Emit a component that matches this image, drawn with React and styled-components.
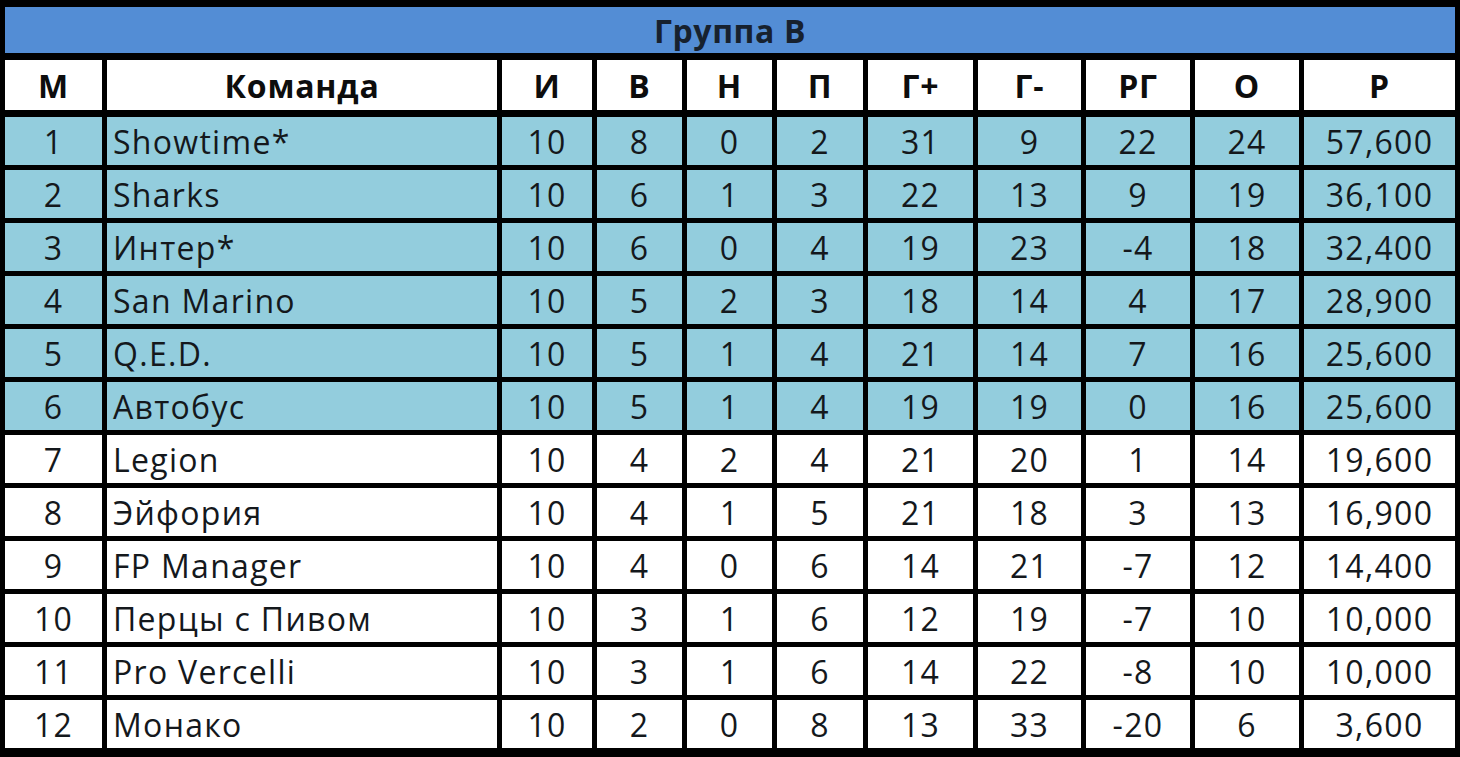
import React from 'react'
import styled, { createGlobalStyle } from 'styled-components'

const GlobalStyle = createGlobalStyle`
    html, body {
        margin: 0;
        padding: 0;
        background: #000;
    }
`;

const COLUMNS = '97px 390px 90px 85px 85px 86px 105px 103px 104px 104px 151px';

const Board = styled.div`
    width: 1460px;
    height: 757px;
    box-sizing: border-box;
    background: #000;
    padding: 7px 5px 9px 5px;
    display: flex;
    flex-direction: column;
    font-family: "Open Sans", "Noto Sans", sans-serif;
    color: #16191d;
`;

const Title = styled.div`
    height: 46px;
    background: #538dd5;
    display: flex;
    align-items: center;
    justify-content: center;
    font-size: 32px;
    font-weight: 700;
    letter-spacing: 0.6px;
    color: #17212e;
    margin-bottom: 7px;
`;

const Row = styled.div`
    display: grid;
    grid-template-columns: ${COLUMNS};
    column-gap: 5px;
    height: ${p => (p.$head ? 50 : 48)}px;
    margin-bottom: ${p => (p.$head ? 7 : p.$last ? 0 : 5)}px;
`;

const Cell = styled.div`
    background: ${p => (p.$tone === 'blue' ? '#93cddd' : '#ffffff')};
    display: flex;
    align-items: center;
    justify-content: ${p => (p.$left ? 'flex-start' : 'center')};
    padding-left: ${p => (p.$left ? 6 : 0)}px;
    font-size: 32px;
    font-weight: ${p => (p.$head ? 700 : 500)};
    letter-spacing: ${p => (p.$head ? 0.8 : 1.3)}px;
    color: ${p => (p.$head ? '#0d0d0d' : '#14181c')};
    white-space: nowrap;
    overflow: hidden;
`;

const headers = ['М', 'Команда', 'И', 'В', 'Н', 'П', 'Г+', 'Г-', 'РГ', 'О', 'Р'];

const teams = [
    [1, 'Showtime*', 10, 8, 0, 2, 31, 9, 22, 24, '57,600'],
    [2, 'Sharks', 10, 6, 1, 3, 22, 13, 9, 19, '36,100'],
    [3, 'Интер*', 10, 6, 0, 4, 19, 23, -4, 18, '32,400'],
    [4, 'San Marino', 10, 5, 2, 3, 18, 14, 4, 17, '28,900'],
    [5, 'Q.E.D.', 10, 5, 1, 4, 21, 14, 7, 16, '25,600'],
    [6, 'Автобус', 10, 5, 1, 4, 19, 19, 0, 16, '25,600'],
    [7, 'Legion', 10, 4, 2, 4, 21, 20, 1, 14, '19,600'],
    [8, 'Эйфория', 10, 4, 1, 5, 21, 18, 3, 13, '16,900'],
    [9, 'FP Manager', 10, 4, 0, 6, 14, 21, -7, 12, '14,400'],
    [10, 'Перцы с Пивом', 10, 3, 1, 6, 12, 19, -7, 10, '10,000'],
    [11, 'Pro Vercelli', 10, 3, 1, 6, 14, 22, -8, 10, '10,000'],
    [12, 'Монако', 10, 2, 0, 8, 13, 33, -20, 6, '3,600'],
];

const App = () => {
    return (
        <>
            <GlobalStyle />
            <Board>
                <Title>Группа B</Title>
                <Row $head>
                    {headers.map(h => (
                        <Cell key={h} $head>{h}</Cell>
                    ))}
                </Row>
                {teams.map((team, i) => (
                    <Row key={team[0]} $last={i === teams.length - 1}>
                        {team.map((value, j) => (
                            <Cell key={j} $tone={i < 6 ? 'blue' : 'white'} $left={j === 1}>
                                {value}
                            </Cell>
                        ))}
                    </Row>
                ))}
            </Board>
        </>
    )
}

export default App;
